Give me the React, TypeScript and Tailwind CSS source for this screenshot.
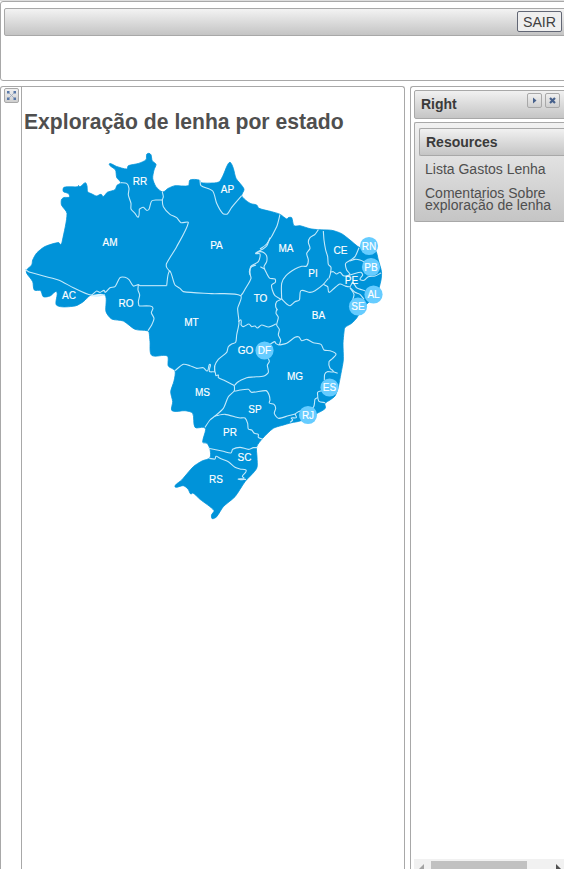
import React from "react";

type Region = { x: number; y: number; lines: string[] };

const COUNTRY =
  "26.5,270 31.7,265 32.7,260 36.7,253 45,246.5 58.5,242.5 60.8,244.5 62.5,240 67,213.5 61.5,205 61.5,199.5 64,197.5 69.5,197 68.3,193.5 63.3,191.5 64,187.3 78,186.8 78.5,185.5 80,186.8 85.3,182.7 87,186 87.7,191.7 92,194 96.5,196 101,194.3 103.3,196.5 107.3,192.3 115,189.7 117,185.3 120.7,182.7 116.7,177.5 115.5,170 109.3,164 116.7,166.5 126.7,169 128.3,165.7 138.3,163.5 146,159.7 146.7,154.3 149,153.3 151,154.8 152.3,161 156,164.3 154,170 152.7,178.3 156,186.7 162.7,192 168.3,188.3 175,185.7 188.3,185.7 190,180 199.3,180 201,182.7 213.3,183 219.3,181.7 223.3,175 227,166 230,162.3 233.3,168.3 236,178.3 244,189 241.7,195.7 246.7,201 251,203.7 256.7,205 259,208.3 271.7,211.7 280,214.3 286.7,219 288.5,217.5 291.7,217.7 294,225.7 300,225.7 310,228.7 318.3,229.7 331.7,230.3 341.7,233.7 350,240 360,247.7 375,250 378.3,260 381.5,271.7 381,280 376.7,294 363,308 356.7,318 351.7,323.3 345,327.5 344,332 343,343.3 343.3,360 341,373.3 338,388 335,396 330,400 325,403.5 325.3,408.3 318.3,412.7 300,421 291.7,422.7 281.7,425.5 273.3,428.3 262.7,438.3 256.7,446.7 257,457 256.7,468.3 245,481.7 235,496.7 223.3,506.7 216.7,516.7 212.3,518.7 211.5,515 214,510.5 200,499.3 193,493 190.7,494 188,489 183.3,485.7 175,486.7 181.7,480 193.3,466.7 202,461 210,457.7 210,449.3 207,443.3 202.7,442.3 205.7,429.3 203.3,427.3 195,427.3 192.7,413.3 185,410.7 172,410.7 172.7,401.7 170.7,391.7 174,381 175,370.7 168.3,366 167.3,356 151.7,355.3 150,341.7 149,332 147.3,330.7 135,329.3 123.3,321 111.7,319 106,311.7 105,295 91,295 83.3,301.7 75,306 56.7,305.3 56.7,291.7 50,296 43.3,296.7 40.7,290.7 34.3,290 32.7,281.7 26.7,273.3";

// Border lines are drawn on a grid of thirds, relative to each region's corner.
const REGIONS: Region[] = [
  {
    x: 20, y: 145,
    lines: ["302,113 320,115 327,130 325,150 333,175 333,192 345,205 355,216 358,192"],
  },
  {
    x: 140, y: 145,
    lines: [
      "-2,192 10,187 20,196 27,193 35,168 50,165 67,165",
      "67,141 70,155 67,165 70,185 90,208 110,218 123,233 145,233 110,305 80,355 80,367 90,380",
      "180,105 183,122 218,138 230,175 248,205 262,207 275,187 305,152",
      "390,278 380,303 367,313 347,325 360,327 355,350 332,365 330,390",
    ],
  },
  {
    x: 260, y: 205,
    lines: [
      "60,28 50,65 20,117 0,132",
      "-13,145 0,140 12,143 20,153 20,170 12,185 20,205 30,220 45,222 46,232 35,240 37,255 45,272 62,282",
      "1,185 15,193",
      "65,282 50,290 47,305 53,316",
      "175,74 165,88 150,98 145,112 150,130 140,145 145,165 140,183 125,184 105,192 78,212 65,235 65,282",
      "65,282 80,297 90,302 105,290 118,285 123,257 150,262 165,257 190,238 205,220",
      "190,78 192,105 197,135 203,155 205,178 213,187 211,207 207,220",
      "210,202 220,200 230,207 240,202 250,212 262,213",
      "297,128 285,155 272,165 257,175 260,195 270,208 260,213",
      "270,168 285,163 300,165 318,173",
      "260,213 280,207 303,202 308,210 300,223 312,226 325,215 345,213 363,204",
      "190,238 203,245 207,262 220,252 240,237 255,243 270,245 278,233 290,248 315,257",
      "270,248 285,262 300,268 312,283",
      "270,248 282,268 278,285",
    ],
  },
  {
    x: 20, y: 240,
    lines: [
      "15,88 30,97 115,120 160,143 213,165 230,153 240,157 252,151 256,157 270,143 285,140 300,113 315,112 327,119 340,138 355,134 360,137",
      "213,167 233,168 255,164",
      "355,134 354,150 359,165 355,185 357,198",
    ],
  },
  {
    x: 140, y: 265,
    lines: [
      "0,62 80,62",
      "80,62 84,30 90,18 105,60 120,70 130,80 215,86 302,92 293,130 297,173 290,210 287,232 275,237 265,245 260,262 235,283 224,303 224,320",
      "348,0 335,5 328,20 333,40 315,73 308,85 302,92",
      "295,170 303,165 303,180",
      "-3,123 30,123 39,129 34,143 42,160 35,180 24,197",
    ],
  },
  {
    x: 240, y: 310,
    lines: [
      "3,45 10,50 27,42 35,50 45,48 52,54 65,45 85,51 108,42",
      "110,-2 108,10 115,22 110,45 118,58 115,75 122,90 118,105",
      "118,105 140,100 165,82 177,81 185,92 200,88 220,98 243,103 252,120 270,122 288,132 278,145 267,155 270,175 280,185 262,185 254,193 253,210",
      "118,105 108,101 104,95 90,103",
      "85,145 88,155 82,165 85,187 72,198 40,201 20,203 0,212",
      "0,240 25,238 35,247 78,242 87,254 90,270 88,279 102,283 107,295 103,310 115,325 145,317 165,312 175,305 220,292 225,268 233,262 233,247 245,242",
      "280,185 293,190",
      "233,262 237,274 255,278",
      "150,337 158,330 154,324 169,323 165,312",
      "0,324 15,324 23,340 25,357 35,360 43,370 55,373 55,382 68,388",
    ],
  },
  {
    x: 140, y: 340,
    lines: [
      "105,92 130,73 150,77 170,85 190,83 202,93 210,73 208,94 225,96 228,107 235,105 235,113 255,122 283,137",
      "283,137 290,129 300,122",
      "224,78 224,96",
      "283,137 283,152 265,170 250,205 225,228 210,240 195,262",
      "283,154 300,150",
      "225,228 255,223 290,232 300,234",
      "205,325 250,334 273,339 278,328 300,322 325,328 340,323 352,323",
    ],
  },
  {
    x: 160, y: 400,
    lines: [
      "148,175 165,177 168,169 180,175 205,185 225,202 240,207 258,210 257,217 247,229 252,235 235,238 258,238",
    ],
  },
];

const LABELS: [string, number, number][] = [
  ["RR", 140, 181.5], ["AP", 227.5, 189.5], ["AM", 110, 242.5], ["PA", 216.5, 245.5],
  ["MA", 286, 248.5], ["CE", 340.5, 250.5], ["PI", 313, 273.5], ["PE", 351.5, 280],
  ["AC", 69, 295.5], ["RO", 126, 303.5], ["TO", 260.5, 298.5], ["MT", 191.5, 322.5],
  ["BA", 318.5, 315.5], ["GO", 245.5, 350.5], ["MG", 295, 376.5], ["MS", 202.5, 392.5],
  ["SP", 255, 409.5], ["PR", 230, 432.5], ["SC", 244.5, 457.5], ["RS", 216, 479.5],
];

const CIRCLES: [string, number, number][] = [
  ["RN", 369, 246], ["PB", 371, 267], ["AL", 373.5, 294.5], ["SE", 358, 306.5],
  ["DF", 264.5, 350.5], ["ES", 329.5, 387.5], ["RJ", 308, 415],
];

// Turns a list of points into a gently curved path through all of them.
function curve(points: string, closed = false) {
  const p = points.split(" ").map((s) => s.split(",").map(Number));
  const n = p.length;
  const at = (i: number) => (closed ? p[(i + n) % n] : p[Math.max(0, Math.min(n - 1, i))]);
  const k = 0.12;
  let d = `M${p[0][0]} ${p[0][1]}`;
  for (let i = 0; i < (closed ? n : n - 1); i++) {
    const [a, b, c, e] = [at(i - 1), at(i), at(i + 1), at(i + 2)];
    const len = Math.hypot(c[0] - b[0], c[1] - b[1]);
    const before = Math.hypot(c[0] - a[0], c[1] - a[1]) || 1;
    const after = Math.hypot(e[0] - b[0], e[1] - b[1]) || 1;
    const s = Math.min(k * 2, 0.3) * len;
    d += `C${b[0] + ((c[0] - a[0]) / before) * s} ${b[1] + ((c[1] - a[1]) / before) * s} ${c[0] - ((e[0] - b[0]) / after) * s} ${c[1] - ((e[1] - b[1]) / after) * s} ${c[0]} ${c[1]}`;
  }
  return closed ? d + "Z" : d;
}

function BrazilMap() {
  return (
    <svg width="362" height="374" viewBox="22 148 362 374" className="block" fontFamily="Liberation Sans, Arial, sans-serif" fontSize="10" textAnchor="middle">
      <path d={curve(COUNTRY, true)} fill="#0093d9" stroke="#0093d9" strokeWidth="0.8" strokeLinejoin="round" />
      {REGIONS.map((r) => (
        <g key={`${r.x}-${r.y}`} transform={`translate(${r.x} ${r.y}) scale(0.33333)`} fill="none" stroke="#c4e9fa" strokeWidth="3.3" strokeLinejoin="round">
          {r.lines.map((line) => <path key={line} d={curve(line)} />)}
        </g>
      ))}
      {CIRCLES.map(([name, x, y]) => <circle key={name} cx={x} cy={y} r="9.1" fill="#66ccff" />)}
      {[...LABELS, ...CIRCLES].map(([name, x, y]) => (
        <text key={name} x={x} y={y + 3.5} fill="#fff" stroke="#fff" strokeWidth="0.15">{name}</text>
      ))}
    </svg>
  );
}

function IconButton({ children }: { children: React.ReactNode }) {
  return (
    <span className="flex size-[15px] shrink-0 items-center justify-center rounded-[2px] border border-[#a8a8a8] bg-linear-to-b from-[#f0f0f0] to-[#cfcfcf]">
      {children}
    </span>
  );
}

export default function App() {
  return (
    <div className="flex h-[869px] w-[564px] flex-col overflow-hidden bg-white font-['Liberation_Sans',Arial,sans-serif] text-[#4f4f4f]">
      <div className="h-px shrink-0 bg-[#dedede]" />
      <header className="h-20 w-[570px] shrink-0 rounded-[3px] border border-[#a8a8a8] pt-1.5 pl-[3px]">
        <div className="flex h-7 w-[564px] justify-end rounded-[2px] border border-[#a8a8a8] bg-linear-to-b from-[#f3f3f3] to-[#c4c4c4] pt-0.5 pr-[5px]">
          <button className="h-[21px] w-[45px] rounded-[2px] border border-[#626775] bg-[#efefef] text-[14.2px] leading-[20px] text-[#404040]">SAIR</button>
        </div>
      </header>

      <main className="mt-[5px] flex min-h-0 w-[574px] flex-1 gap-[5px]">
        <section className="flex w-[405px] shrink-0 rounded-t-[3px] border border-b-0 border-[#a8a8a8]">
          <div className="flex w-[21px] shrink-0 justify-end border-r border-[#a8a8a8] pt-px pr-0.5">
            <IconButton>
              <svg width="9" height="9" viewBox="0 0 9 9" className="shrink-0">
                <path d="M0 0h3L2 1l1 1-1 1-1-1-1 1zM9 0v3L8 2 7 3 6 2l1-1-1-1zM0 9V6l1 1 1-1 1 1-1 1 1 1zM9 9H6l1-1-1-1 1-1 1 1 1-1z" fill="#5878a8" />
                <path d="M3 3l3 3M6 3L3 6" stroke="#9eacbf" strokeWidth="0.9" />
              </svg>
            </IconButton>
          </div>
          <div className="flex flex-col">
            <h1 className="mt-[21px] ml-0.5 h-[27px] text-[21.15px] leading-[27px] font-bold whitespace-nowrap">Exploração de lenha por estado</h1>
            <div className="mt-[13px]"><BrazilMap /></div>
          </div>
        </section>

        <aside className="flex w-[164px] shrink-0 flex-col rounded-tl-[3px] border border-r-0 border-b-0 border-[#a8a8a8] pt-[3px] pl-[3px]">
          <div className="flex h-[29px] shrink-0 rounded-l-[2px] border border-[#a8a8a8] bg-linear-to-b from-[#f1f1f1] to-[#c5c5c5] pt-0.5 pl-1.5">
            <h2 className="w-[106px] text-[14px] leading-[23px] font-bold text-[#3a3a3a]">Right</h2>
            <div className="flex gap-[3px]">
              <IconButton>
                <svg width="9" height="9" viewBox="0 0 9 9"><path d="M3 1.5L6.5 4.5 3 7.5z" fill="#47618c" /></svg>
              </IconButton>
              <IconButton>
                <svg width="9" height="9" viewBox="0 0 9 9"><path d="M2 2l5 5M7 2L2 7" stroke="#47618c" strokeWidth="2.2" /></svg>
              </IconButton>
            </div>
          </div>
          <div className="mt-[3px] h-[100px] shrink-0 rounded-l-[2px] border border-r-0 border-[#a8a8a8] bg-linear-to-b from-[#f1f1f1] to-[#c5c5c5] pt-[5px] pl-1">
            <h3 className="h-7 rounded-l-[2px] border border-r-0 border-[#a8a8a8] bg-linear-to-b from-[#f1f1f1] to-[#c5c5c5] pl-1.5 text-[14px] leading-[27px] font-bold text-[#3a3a3a]">Resources</h3>
            <div className="flex flex-col gap-3 pt-[7px] pl-1.5 text-[14px] leading-3 whitespace-nowrap">
              <a>Lista Gastos Lenha</a>
              <a>Comentarios Sobre<br />exploração de lenha</a>
            </div>
          </div>
          <div className="mt-auto flex h-2.5 shrink-0 bg-[#f1f1f1] pt-0.5">
            <svg width="17" height="8" className="shrink-0"><path d="M10 3L5 8h5z" fill="#a3a3a3" /></svg>
            <div className="w-24 shrink-0 bg-[#c1c1c1]" />
            <svg width="37" height="8" className="shrink-0"><path d="M29 3l5 5h-5z" fill="#505050" /></svg>
          </div>
        </aside>
      </main>
    </div>
  );
}
